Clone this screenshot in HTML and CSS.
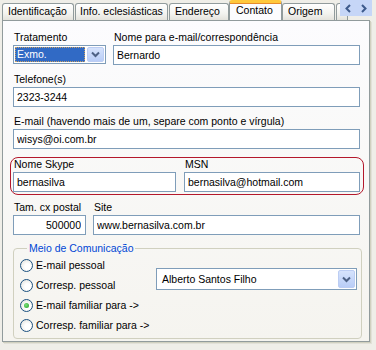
FILE: index.html
```html
<!DOCTYPE html>
<html lang="pt">
<head>
  <meta charset="UTF-8">
  <title>Contato</title>
  <link rel="stylesheet" href="styles.css">
</head>
<body>
  <div class="janela">
    <div class="abas">
      <div class="aba aba-ident">Identificação</div>
      <div class="aba aba-info">Info. eclesiásticas</div>
      <div class="aba aba-end">Endereço</div>
      <div class="aba aba-ativa">Contato</div>
      <div class="aba aba-origem">Origem</div>
      <div class="aba aba-d">D</div>
      <div class="rolagem">
        <span class="seta"><svg width="6" height="9" viewBox="0 0 6 9"><path d="M5 1 L1.5 4.5 L5 8" fill="none" stroke="#3d5a8c" stroke-width="2"/></svg></span>
        <span class="seta"><svg width="6" height="9" viewBox="0 0 6 9"><path d="M1 1 L4.5 4.5 L1 8" fill="none" stroke="#3d5a8c" stroke-width="2"/></svg></span>
      </div>
    </div>

    <div class="pagina">
      <div class="linha">
        <div class="campo col-trat">
          <label>Tratamento</label>
          <div class="combo">
            <div class="combo-texto selecionado"><span>Exmo.</span></div>
            <div class="combo-botao"><svg width="9" height="7" viewBox="0 0 9 7"><path d="M1 1.5 L4.5 5 L8 1.5" fill="none" stroke="#4d6185" stroke-width="2"/></svg></div>
          </div>
        </div>
        <div class="campo cresce">
          <label>Nome para e-mail/correspondência</label>
          <input type="text" value="Bernardo">
        </div>
      </div>

      <div class="linha">
        <div class="campo cresce">
          <label>Telefone(s)</label>
          <input type="text" value="2323-3244">
        </div>
      </div>

      <div class="linha">
        <div class="campo cresce">
          <label>E-mail (havendo mais de um, separe com ponto e vírgula)</label>
          <input type="text" value="wisys@oi.com.br">
        </div>
      </div>

      <div class="linha destaque">
        <div class="campo col-skype">
          <label>Nome Skype</label>
          <input type="text" value="bernasilva">
        </div>
        <div class="campo cresce">
          <label>MSN</label>
          <input type="text" value="bernasilva@hotmail.com">
        </div>
      </div>

      <div class="linha linha-site">
        <div class="campo col-cx">
          <label>Tam. cx postal</label>
          <input type="text" class="direita" value="500000">
        </div>
        <div class="campo cresce">
          <label>Site</label>
          <input type="text" value="www.bernasilva.com.br">
        </div>
      </div>

      <fieldset class="meio">
        <legend>Meio de Comunicação</legend>
        <div class="meio-corpo">
          <div class="opcoes">
            <div class="opcao"><span class="radio"></span>E-mail pessoal</div>
            <div class="opcao"><span class="radio"></span>Corresp. pessoal</div>
            <div class="opcao"><span class="radio marcado"></span>E-mail familiar para -&gt;</div>
            <div class="opcao"><span class="radio"></span>Corresp. familiar para -&gt;</div>
          </div>
          <div class="combo combo-familiar">
            <div class="combo-texto"><span>Alberto Santos Filho</span></div>
            <div class="combo-botao"><svg width="9" height="7" viewBox="0 0 9 7"><path d="M1 1.5 L4.5 5 L8 1.5" fill="none" stroke="#4d6185" stroke-width="2"/></svg></div>
          </div>
        </div>
      </fieldset>
    </div>
  </div>
</body>
</html>
```

FILE: styles.css
```css
* {
  box-sizing: border-box;
  margin: 0;
  padding: 0;
}

body {
  font-family: 'Liberation Sans', Arial, sans-serif;
  font-size: 10.5px;
  color: #000;
  background: #efeee8;
}

.janela {
  width: 376px;
  height: 350px;
  overflow: hidden;
}

/* abas */
.abas {
  display: flex;
  align-items: flex-end;
  height: 20px;
  padding-left: 2px;
  position: relative;
  z-index: 2;
  overflow: hidden;
}

.aba {
  height: 17px;
  line-height: 15px;
  padding: 0 0 0 5px;
  border: 1px solid #919b9c;
  border-bottom: none;
  border-radius: 3px 3px 0 0;
  background: linear-gradient(#ffffff, #f3f3ef 60%, #e4e3dc);
  white-space: nowrap;
  overflow: hidden;
  margin-right: 1px;
}

.aba-ident { width: 72px; }
.aba-info { width: 93px; padding-left: 4px; }
.aba-end { width: 60px; margin-right: 0; }
.aba-origem { width: 53px; }
.aba-d { width: 12px; flex-shrink: 0; padding-left: 4px; }

.aba-ativa {
  width: 53px;
  height: 21px;
  margin-bottom: -1px;
  margin-right: 0;
  background: #fcfcfe;
  border-top: 3px solid #ffc83c;
  box-shadow: inset 0 1px 0 #e68b2c;
  border-radius: 3px 3px 0 0;
  padding-left: 6px;
  line-height: 15px;
}

.rolagem {
  position: absolute;
  left: 340px;
  top: 0;
  width: 32px;
  height: 16px;
  background: #c6d6f7;
  display: flex;
}

.seta {
  width: 16px;
  display: flex;
  align-items: center;
  justify-content: center;
}

/* pagina */
.pagina {
  margin-left: 2px;
  width: 368px;
  height: 322px;
  border: 1px solid #919b9c;
  background: linear-gradient(#fcfcfe, #f5f4ef);
  box-shadow: 1px 1px 0 #d0d0bf, 2px 2px 0 #e2e1d8;
  padding: 10px 9px 0 10px;
  position: relative;
  z-index: 1;
}

.linha {
  display: flex;
  gap: 7px;
  margin-bottom: 8px;
}

.campo {
  display: flex;
  flex-direction: column;
}

.campo label {
  height: 14px;
  line-height: 13px;
  padding-left: 1px;
}

.cresce { flex: 1; }
.col-trat { width: 93px; }
.col-skype { width: 163px; }
.col-cx { width: 73px; }

input {
  height: 20px;
  border: 1px solid #7f9db9;
  background: #fff;
  font-family: 'Liberation Sans', Arial, sans-serif;
  font-size: 10.5px;
  padding: 0 3px;
  color: #000;
  width: 100%;
}

input.direita {
  text-align: right;
  padding-right: 4px;
}

.combo {
  display: flex;
  height: 19px;
  border: 1px solid #7f9db9;
  background: #fff;
}

.combo-texto {
  flex: 1;
  padding: 1px;
  line-height: 15px;
  white-space: nowrap;
  overflow: hidden;
}

.combo-texto span {
  display: block;
  padding-left: 2px;
}

.combo-texto.selecionado span {
  background: #316ac5;
  color: #fff;
  outline: 1px dotted #c9a063;
  outline-offset: -1px;
}

.combo-botao {
  width: 17px;
  margin: 1px;
  border-radius: 2px;
  background: linear-gradient(#d6e3fc, #b9cdf7);
  border: 1px solid #bccdf3;
  display: flex;
  align-items: center;
  justify-content: center;
}

.destaque {
  margin: 6px -4px 6px -3px;
  border: 1px solid #b4182c;
  border-radius: 8px;
  padding: 0 3px 2px 2px;
  gap: 8px;
}

.linha-site {
  margin-bottom: 0;
}

/* meio de comunicacao */
.meio {
  margin: 7px -2px 0 0;
  border: 1px solid #d0d0bf;
  border-radius: 4px;
  padding: 0 4px 3px 6px;
}

.meio legend {
  color: #0046d5;
  margin-left: 7px;
  padding: 0 2px;
  line-height: 13px;
}

.meio-corpo {
  display: flex;
  justify-content: space-between;
}

.opcao {
  height: 20px;
  display: flex;
  align-items: center;
  gap: 3px;
}

.radio {
  width: 13px;
  height: 13px;
  border-radius: 50%;
  border: 1px solid #1c5180;
  background: radial-gradient(circle at 60% 60%, #ffffff 30%, #dcdcd5 100%);
  position: relative;
}

.radio.marcado::after {
  content: "";
  position: absolute;
  left: 3px;
  top: 3px;
  width: 5px;
  height: 5px;
  border-radius: 50%;
  background: radial-gradient(circle at 40% 40%, #7ce07c, #21a121);
}

.combo-familiar {
  width: 201px;
  height: 22px;
  margin-top: 13px;
}

.combo-familiar .combo-texto {
  line-height: 18px;
  padding-left: 3px;
}
```
